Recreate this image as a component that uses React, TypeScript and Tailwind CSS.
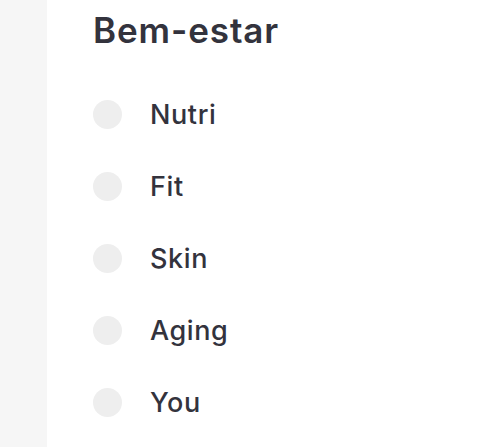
const items = ['Nutri', 'Fit', 'Skin', 'Aging', 'You']

export default function App() {
  return (
    <div className="flex h-[447px] w-[500px] bg-white font-['Inter','Noto_Sans',sans-serif] text-[#33333d]">
      <div className="w-[47px] shrink-0 bg-[#f6f6f6]" />
      <div className="pl-[46px] pt-[8px]">
        <h2 className="text-[35px] font-semibold leading-[44px] tracking-[0.9px]">Bem-estar</h2>
        <ul className="mt-[48px] flex flex-col gap-[43px]">
          {items.map(item => (
            <li key={item} className="flex items-center h-[29px]">
              <span className="h-[29px] w-[29px] rounded-full bg-[#eeeeee]" />
              <span className="ml-[28px] text-[27px] font-medium leading-none tracking-[0.6px]">{item}</span>
            </li>
          ))}
        </ul>
      </div>
    </div>
  )
}
